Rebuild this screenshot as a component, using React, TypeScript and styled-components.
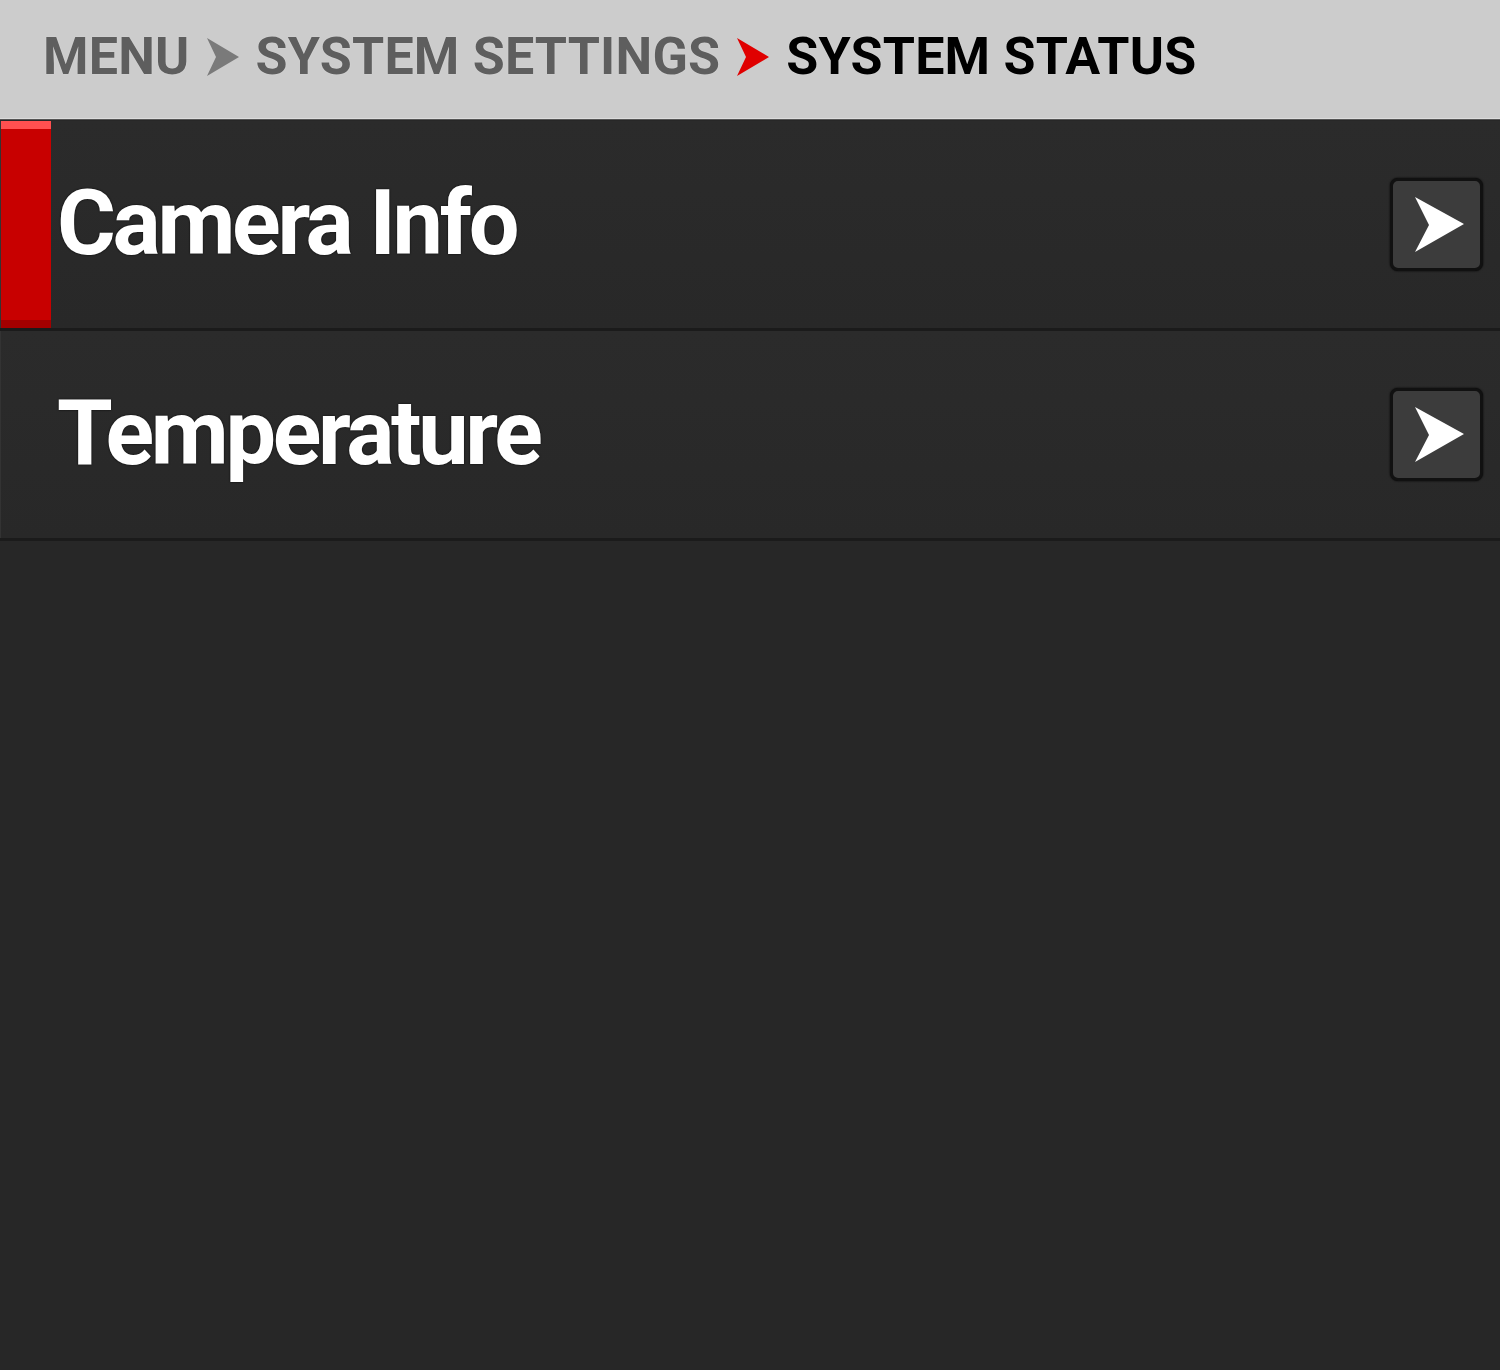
import React from "react";
import styled, {createGlobalStyle} from "styled-components";

const GlobalStyle = createGlobalStyle`
    html, body {
        margin: 0;
        padding: 0;
        background: #272727;
    }
    body {
        font-family: Roboto, "Liberation Sans", sans-serif;
    }
`;

interface Crumb {
    label: string;
    current?: boolean;
}

const CRUMBS: Crumb[] = [
    {label: "MENU"},
    {label: "SYSTEM SETTINGS"},
    {label: "SYSTEM STATUS", current: true},
];

const ITEMS = ["Camera Info", "Temperature"];

const Chevron: React.FC<{red?: boolean}> = ({red}) => (
    <ChevronSvg width="32" height="38" viewBox="0 0 32 38">
        <path d="M0 0 L32 19 L0 38 L9 19 Z" fill={red ? "#e00000" : "#7a7a7a"} />
    </ChevronSvg>
);

const ArrowButton = () => (
    <Button>
        <svg width="50" height="56" viewBox="0 0 50 56">
            <path d="M0 0 L49 27 L0 55 L14 28 Z" fill="#ffffff" />
        </svg>
    </Button>
);

export default function App() {
    return (
        <>
            <GlobalStyle />
            <Page>
                <Header>
                    {CRUMBS.map((c, i) => (
                        <React.Fragment key={c.label}>
                            {i > 0 && <Chevron red={c.current} />}
                            <CrumbText $current={c.current}>{c.label}</CrumbText>
                        </React.Fragment>
                    ))}
                </Header>
                <List>
                    {ITEMS.map((label, i) => (
                        <Row key={label}>
                            <SelectBar $active={i === 0} />
                            <ItemLabel>{label}</ItemLabel>
                            <ArrowButton />
                        </Row>
                    ))}
                </List>
            </Page>
        </>
    );
}

// ---------------------------------------------------------------------------
// Styles
// ---------------------------------------------------------------------------

const Page = styled.div`
    width: 1500px;
    min-height: 1370px;
    background: #272727;
    display: flex;
    flex-direction: column;
`;

const Header = styled.div`
    height: 119px;
    box-sizing: border-box;
    padding-left: 43px;
    padding-bottom: 4px;
    background: #cccccc;
    border-bottom: 1px solid #dcdcdc;
    box-shadow: 0 1px 0 #555;
    display: flex;
    align-items: center;
    gap: 17px;
    margin-bottom: 2px;
`;

const CrumbText = styled.span<{$current?: boolean}>`
    font-family: Roboto, "Liberation Sans", sans-serif;
    font-weight: 700;
    font-size: 52px;
    line-height: 1;
    letter-spacing: 0.2px;
    color: ${p => (p.$current ? "#000000" : "#5e5e5e")};
    text-shadow: 0 0 1px #e8e8e8;
    white-space: nowrap;
`;

const ChevronSvg = styled.svg`
    flex: none;
    display: block;
`;

const List = styled.div`
    display: flex;
    flex-direction: column;
`;

const Row = styled.div`
    height: 207px;
    display: flex;
    align-items: center;
    padding-left: 1px;
    padding-right: 17px;
    background: linear-gradient(#2b2b2b, #282828);
    border-bottom: 3px solid #1b1b1b;
    box-shadow: inset 1px 0 0 #333;
`;

const SelectBar = styled.div<{$active?: boolean}>`
    align-self: stretch;
    width: 50px;
    flex: none;
    box-sizing: border-box;
    background: ${p => (p.$active ? "#c80000" : "transparent")};
    border-top: 8px solid ${p => (p.$active ? "#ff5050" : "transparent")};
    border-bottom: 8px solid ${p => (p.$active ? "#a30000" : "transparent")};
`;

const ItemLabel = styled.span`
    flex: 1;
    margin-left: 6px;
    padding-bottom: 2px;
    font-family: Roboto, "Liberation Sans", sans-serif;
    font-weight: 700;
    font-size: 90px;
    line-height: 1;
    letter-spacing: -3.3px;
    color: #ffffff;
    text-shadow: 0 0 2px #000;
    white-space: nowrap;
`;

const Button = styled.div`
    width: 93px;
    height: 93px;
    box-sizing: border-box;
    flex: none;
    border: 3px solid #111;
    border-radius: 8px;
    background: #3c3c3c;
    box-shadow: 0 0 2px #000;
    display: flex;
    align-items: center;
    justify-content: center;
    padding-left: 6px;
`;
